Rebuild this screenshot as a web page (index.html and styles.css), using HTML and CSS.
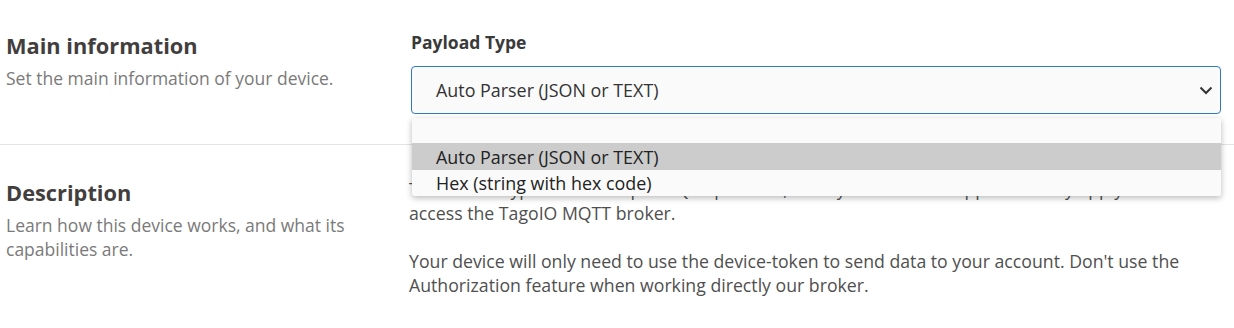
FILE: index.html
```html
<!DOCTYPE html>
<html lang="en">
<head>
<meta charset="utf-8">
<title>Device</title>
<link rel="stylesheet" href="styles.css">
</head>
<body>
<div class="page">
  <section class="row row-main">
    <div class="side">
      <h2 class="title">Main information</h2>
      <p class="sub">Set the main information of your device.</p>
    </div>
    <div class="content">
      <label class="label">Payload Type</label>
      <div class="select-wrap">
        <div class="select">
          <span class="select-value">Auto Parser (JSON or TEXT)</span>
          <svg class="chev" width="14" height="9" viewBox="0 0 14 9"><path d="M1.5 1.5 L7 7 L12.5 1.5" fill="none" stroke="#333" stroke-width="2"/></svg>
        </div>
        <ul class="menu">
          <li class="opt opt-empty"></li>
          <li class="opt opt-active">Auto Parser (JSON or TEXT)</li>
          <li class="opt">Hex (string with hex code)</li>
        </ul>
      </div>
    </div>
  </section>
  <section class="row row-desc">
    <div class="side">
      <h2 class="title">Description</h2>
      <p class="sub">Learn how this device works, and what its capabilities are.</p>
    </div>
    <div class="content text">
      <p>This device type uses a simple MQTT protocol, so any device that supports it may apply to<br>access the TagoIO MQTT broker.</p>
      <p>Your device will only need to use the device-token to send data to your account. Don't use the Authorization feature when working directly our broker.</p>
    </div>
  </section>
</div>
</body>
</html>
```

FILE: styles.css
```css
html, body {
  margin: 0;
  padding: 0;
  background: #ffffff;
}
body {
  font-family: "Open Sans", "Noto Sans", "Liberation Sans", sans-serif;
  color: #444;
}
.page {
  width: 1234px;
}
.row {
  display: flex;
  padding: 0 13px 0 6px;
}
.row-main {
  padding-top: 30px;
  height: 145px;
  box-sizing: border-box;
  border-bottom: 1px solid #e4e4e4;
}
.row-desc {
  padding-top: 32px;
}
.side {
  width: 404px;
  flex: none;
}
.title {
  margin: 0 0 4px;
  font-size: 21.8px;
  line-height: 32px;
  font-weight: 700;
  color: #433e3e;
}
.sub {
  margin: 0;
  font-size: 17.5px;
  line-height: 24px;
  color: #7a7a7a;
  width: 370px;
}
.content {
  flex: 1;
}
.label {
  display: block;
  font-size: 17.5px;
  font-weight: 700;
  color: #3a3a3a;
  line-height: 24px;
  margin-left: 1px;
}
.select-wrap {
  position: relative;
  margin-top: 12px;
  margin-left: 1px;
}
.select {
  height: 48px;
  box-sizing: border-box;
  border: 1px solid #2f7ac2;
  border-radius: 4px;
  background: #fafafa;
  display: flex;
  align-items: center;
  justify-content: space-between;
  padding: 0 7px 0 24px;
}
.select-value {
  font-size: 17.9px;
  color: #333;
}
.chev {
  display: block;
}
.menu {
  position: absolute;
  left: 1px;
  right: 0;
  top: 52px;
  margin: 0;
  padding: 0;
  list-style: none;
  background: #fafafa;
  box-shadow: 0 2px 6px rgba(0,0,0,0.28);
  border-radius: 2px;
  z-index: 5;
}
.opt {
  height: 26px;
  line-height: 26px;
  padding-left: 24px;
  font-size: 17.9px;
  color: #222;
}
.opt-empty { height: 25px; }
.opt-active {
  background: #cccccc;
  height: 27px;
  line-height: 28px;
}
.text p {
  margin: 0 0 24px;
  font-size: 17.7px;
  line-height: 24px;
  color: #4f4f4f;
  margin-left: -1px;
}
```
